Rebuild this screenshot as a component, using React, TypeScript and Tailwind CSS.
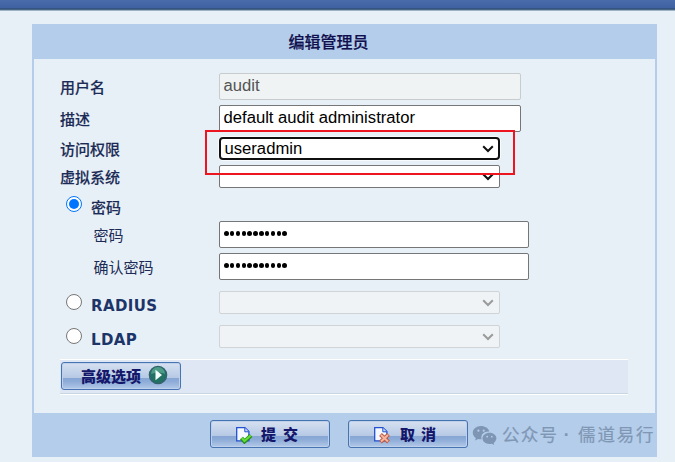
import type { ReactNode } from 'react';
import clsx from 'clsx';

function Chevron({ muted }: { muted?: boolean }) {
  return (
    <svg viewBox="0 0 12 8" className={clsx('h-2 w-3', muted ? 'text-[#9a9b9c]' : 'text-[#101010]')}>
      <path d="M1.2 1.2 6 6l4.8-4.8" fill="none" stroke="currentColor" strokeWidth="2" />
    </svg>
  );
}

function TextField({ value, className }: { value: string; className?: string }) {
  return (
    <div
      className={clsx(
        'flex h-[27px] items-center rounded-[2px] border px-[3.5px] pb-px text-[16.65px] leading-none',
        className,
      )}
    >
      {value}
    </div>
  );
}

function SelectField({ value, state }: { value?: string; state?: 'focus' | 'disabled' }) {
  return (
    <div
      className={clsx(
        'flex h-[23px] w-[281px] items-center justify-between text-[16.65px] leading-none text-black',
        !state && 'rounded-[2px] border border-[#767676] bg-white pr-[5px]',
        state === 'focus' && 'rounded-[4px] border-2 border-[#101010] bg-white pr-1 pl-[3.5px] ring-1 ring-white/70',
        state === 'disabled' && 'rounded-[2px] border border-[#d0d4d6] bg-[#eff3f5] pr-[5px]',
      )}
    >
      <span className="pt-px">{value}</span>
      <Chevron muted={state === 'disabled'} />
    </div>
  );
}

function Row({ label, className, children }: { label: string; className?: string; children: ReactNode }) {
  return (
    <div className={clsx('flex', className)}>
      <div className="flex w-[159px] items-center pt-px text-[15px] leading-none font-medium [-webkit-text-stroke:0.15px]">
        {label}
      </div>
      {children}
    </div>
  );
}

function Radio({ checked }: { checked?: boolean }) {
  return (
    <span
      className={clsx(
        'mb-[2px] flex size-4 shrink-0 items-center justify-center rounded-full border bg-white',
        checked ? 'border-[#0075ff]' : 'border-[#767676]',
      )}
    >
      {checked && <span className="size-[10px] rounded-full bg-[#0075ff]" />}
    </span>
  );
}

// Glossy toolbar button: light upper part, darker band starting past the middle
function GlossButton({ className, children }: { className?: string; children: ReactNode }) {
  return (
    <button
      className={clsx(
        'flex h-7 w-[120px] items-center rounded-[3px] border border-[#4673b1] bg-[linear-gradient(#d6e1f1_0%,#b7c9e5_56%,#88a6d4_58%,#8eacd8_72%,#b2c9e8_100%)] text-[15px] leading-none font-black text-[#15176b] shadow-[inset_0_0_0_1px_#bfd0ea]',
        className,
      )}
    >
      {children}
    </button>
  );
}

function PageIcon({ children }: { children: ReactNode }) {
  return (
    <svg viewBox="0 0 18 18" className="mt-px size-[18px] shrink-0">
      <path d="M1.7 1.6h8.2l4 4v9.2H1.7z" fill="#f5f9ff" stroke="#2350cf" strokeWidth="1.3" />
      <path d="M9.8 1.8v4h4" fill="#c8daf9" stroke="#2350cf" strokeWidth="1" />
      {children}
    </svg>
  );
}

function WechatIcon() {
  return (
    <svg viewBox="0 0 25 21" className="mb-px h-[21px] w-[25px]">
      <path
        d="M9 1C4.4 1 .8 4 .8 7.7c0 2.1 1.2 4 3 5.2l-.7 2.6 3-1.6c.9.3 1.9.4 2.9.4h.6C8.3 9.8 11.7 6.5 16.8 6.5h.5C16.5 3.3 13 1 9 1Z"
        fill="#7e96b4"
      />
      <path
        d="M17.5 7.7c-4 0-7 2.5-7 5.6s3 5.7 7 5.7c.8 0 1.6-.1 2.3-.3l2.4 1.3-.5-2.1c1.6-1.1 2.7-2.7 2.7-4.6 0-3.1-3-5.6-6.9-5.6Z"
        fill="#7e96b4"
      />
      <g fill="#b4cceb">
        <circle cx="6.4" cy="5.7" r="1.1" />
        <circle cx="11.7" cy="5.7" r="1.1" />
        <circle cx="15.2" cy="11.7" r=".9" />
        <circle cx="19.8" cy="11.7" r=".9" />
      </g>
    </svg>
  );
}

export default function App() {
  return (
    <div className="h-[462px] w-[675px] overflow-hidden bg-[#e8f0f7] font-['Liberation_Sans','Noto_Sans_CJK_SC',sans-serif] text-[#1b2b55]">
      <div className="h-[11px] border-b border-[#9db3c5] bg-[linear-gradient(#4a6cab_0,#3f61a1_8px,#35547f_8px,#35547f_9px,#56738f_10px)]" />

      <div className="mt-[13px] ml-8 w-[625px] bg-[#b4cdeb]">
        <h1 className="flex h-[35px] items-center justify-center pr-[32px] pt-[3px] text-[16px] leading-none font-medium text-[#10104f] [-webkit-text-stroke:0.2px]">
          编辑管理员
        </h1>

        <div className="mx-0.5 h-[354px] bg-[#e8f0f7] pt-3.5 pl-[26px]">
          <div className="flex flex-col gap-[5px]">
            <Row label="用户名">
              <TextField value="audit" className="w-[302px] border-[#c8cccd] bg-[#eff3f4] text-[#545454]" />
            </Row>
            <Row label="描述">
              <TextField
                value="default audit administrator"
                className="w-[302px] border-[#767676] bg-white text-black"
              />
            </Row>
            <Row label="访问权限" className="relative">
              <SelectField value="useradmin" state="focus" />
              {/* Highlight over the permission select */}
              <div className="absolute -top-[7px] left-[145px] z-10 h-[45px] w-[310px] border-2 border-[#ed1620]" />
            </Row>
            <Row label="虚拟系统">
              <SelectField />
            </Row>
          </div>

          <div className="flex h-[33px] items-center pl-1.5 text-[15px] leading-none">
            <Radio checked />
            <span className="ml-[9px] pt-[5px] font-medium [-webkit-text-stroke:0.15px]">密码</span>
          </div>

          <div className="flex flex-col gap-[5px]">
            {['密码', '确认密码'].map((label) => (
              <div key={label} className="flex">
                <div className="flex w-[159px] items-center pt-0.5 pl-[33.5px] text-[15px] leading-none">{label}</div>
                <div className="flex h-[27px] w-[310px] items-start gap-[1.35px] rounded-[2px] border border-[#767676] bg-white pt-[9px] pl-1">
                  {Array.from({ length: 11 }, (_, i) => (
                    <span key={i} className="size-[4.5px] rounded-full bg-black" />
                  ))}
                </div>
              </div>
            ))}
          </div>

          {['RADIUS', 'LDAP'].map((name) => (
            <div key={name} className="mt-[11px] flex">
              <div className="flex w-[159px] items-center pl-1.5">
                <Radio checked={false} />
                <span className="ml-[9px] pt-[7px] font-['DejaVu_Sans',sans-serif] text-[15px] leading-none font-bold tracking-[0.4px] text-[#1c3468]">
                  {name}
                </span>
              </div>
              <SelectField state="disabled" />
            </div>
          ))}

          <div className="mt-[11px] flex h-9 w-[568px] items-start border-y border-white bg-[#e0e7f4] pt-0.5 pl-px shadow-[inset_0_-1px_0_#c9d5e1]">
            <GlossButton className="pl-[19px]">
              <span>高级选项</span>
              <svg viewBox="0 0 20 20" className="mb-[2px] ml-[7px] size-5">
                <circle cx="10" cy="10" r="8.7" fill="#237064" stroke="#35616d" strokeWidth="1.2" />
                <path d="M3 9a7 7 0 0 1 14 0c-4-2-9-2-14 0Z" fill="#4e9b88" />
                <path d="M7.5 4.8 14 10l-6.5 5.2z" fill="#f4fffb" />
              </svg>
            </GlossButton>
          </div>
        </div>

        <div className="flex h-11 items-start pt-[7px] pl-[178px]">
          <GlossButton className="pl-[24px]">
            <PageIcon>
              <path d="m6.5 12 3 3.5 6.5-6" fill="none" stroke="#268a1c" strokeWidth="4" />
              <path d="m6.8 12 2.7 3 6.2-5.5" fill="none" stroke="#63df35" strokeWidth="2.2" />
            </PageIcon>
            <span className="ml-[8px]">提</span>
            <span className="ml-[7px]">交</span>
          </GlossButton>
          <GlossButton className="ml-[18px] pl-[24px]">
            <PageIcon>
              <path d="m7.5 8.5 8 7.5m0-7.5-8 7.5" stroke="#bd5b46" strokeWidth="4" />
              <path d="m8 9 7 6.5M15 9l-7 6.5" stroke="#f6b59c" strokeWidth="2" />
            </PageIcon>
            <span className="ml-[9px]">取</span>
            <span className="ml-[6px]">消</span>
          </GlossButton>
          <div className="flex h-7 items-center pt-[3px] pl-1 text-[17.5px] leading-none whitespace-nowrap text-[#8097b4]">
            <WechatIcon />
            <span className="mt-px ml-[5px] tracking-[1.2px] [-webkit-text-stroke:0.2px]">公众号</span>
            <span className="mt-px w-[17px] text-center font-bold">·</span>
            <span className="mt-px ml-[3px] tracking-[1.8px] [-webkit-text-stroke:0.2px]">儒道易行</span>
          </div>
        </div>
      </div>
    </div>
  );
}
